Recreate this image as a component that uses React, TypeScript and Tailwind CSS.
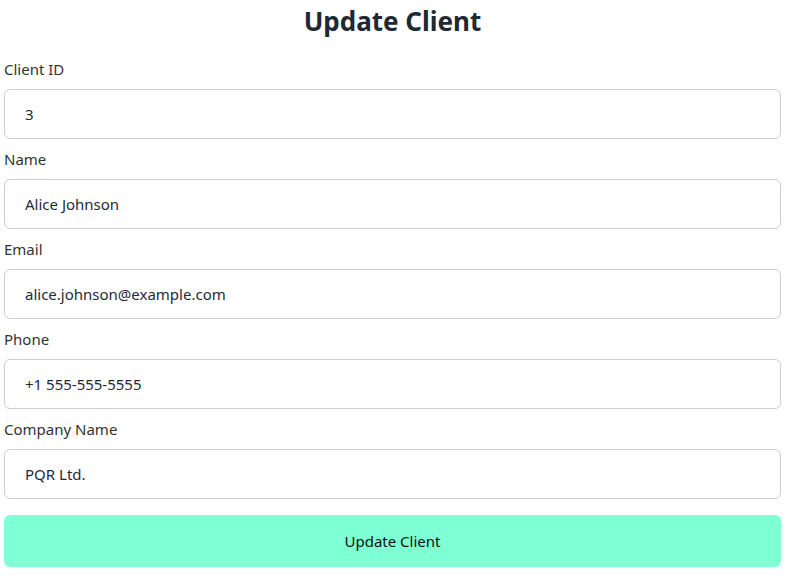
const fields = [
  { label: 'Client ID', value: '3' },
  { label: 'Name', value: 'Alice Johnson' },
  { label: 'Email', value: 'alice.johnson@example.com' },
  { label: 'Phone', value: '+1 555-555-5555' },
  { label: 'Company Name', value: 'PQR Ltd.' },
]

export default function App() {
  return (
    <div className="min-h-screen bg-white pl-1 pr-[11px] font-['Noto_Sans',sans-serif] text-[#212529]">
      <h1 className="h-[42px] text-center text-[26px] font-bold leading-[42px] text-[#1f2933]">Update Client</h1>
      <form className="mt-[15px] flex flex-col" onSubmit={(e) => e.preventDefault()}>
        {fields.map((f) => (
          <div key={f.label} className="flex flex-col">
            <label className="text-[15px] leading-6 text-[#333]">{f.label}</label>
            <input
              readOnly
              value={f.value}
              className="my-2 h-[50px] w-full rounded-md border border-[#ccc] px-5 text-[15px] text-[#1e2a3a] outline-none"
            />
          </div>
        ))}
        <button
          type="submit"
          className="mt-2 h-[52px] w-full rounded-md bg-[#7fffd4] text-[15px] text-[#111]"
        >
          Update Client
        </button>
      </form>
    </div>
  )
}
